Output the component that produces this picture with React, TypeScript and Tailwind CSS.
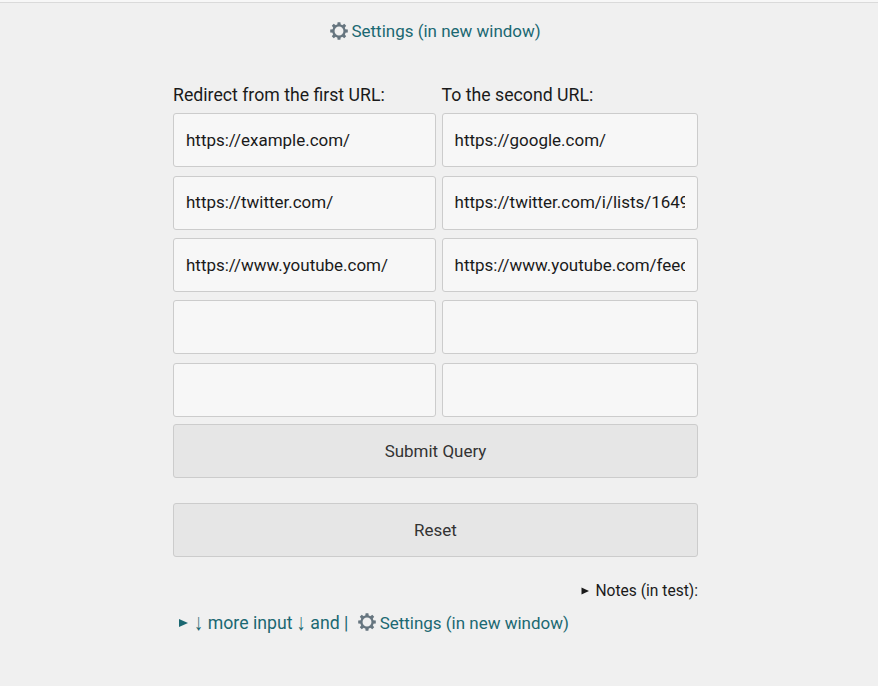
const rows = [
  ['https://example.com/', 'https://google.com/'],
  ['https://twitter.com/', 'https://twitter.com/i/lists/1649283'],
  ['https://www.youtube.com/', 'https://www.youtube.com/feed/subscriptions'],
  ['', ''],
  ['', ''],
];

function Gear() {
  return (
    <svg width="18" height="18" viewBox="0 0 18 18" fill="none" stroke="#66757f" className="mb-[2px] shrink-0">
      <circle cx="9" cy="9" r="5.6" strokeWidth="2.3" />
      {[0, 45, 90, 135, 180, 225, 270, 315].map((a) => (
        <path key={a} d="M7.2 3.4 7.6.2h2.8l.4 3.2z" fill="#66757f" stroke="none" transform={`rotate(${a} 9 9)`} />
      ))}
    </svg>
  );
}

function Field({ value }: { value: string }) {
  return (
    <input
      defaultValue={value}
      className="block h-[54px] w-full min-w-0 rounded-[3px] border border-[#cccccc] bg-[#f7f7f7] px-3 pb-[0.5px] text-[16.98px] text-[#1a1a1a] outline-none"
    />
  );
}

function DownArrow() {
  return <span className="mr-[0.2px] inline-block -translate-y-px scale-y-[1.3] font-['Liberation_Sans',sans-serif] leading-none">↓</span>;
}

export default function App() {
  return (
    <div className="h-[686px] overflow-hidden bg-[#f0f0f0] font-['Roboto',sans-serif] text-[17.6px] text-[#1a1a1a]">
      <div className="h-[3px] border-b border-[#dadada] bg-[#f7f7f7]" />
      <a className="mt-[16px] ml-[330px] flex h-[26px] w-fit items-center gap-[3.5px] text-[16.98px] whitespace-nowrap text-[#1b6872]">
        <Gear />
        <span>Settings (in new window)</span>
      </a>
      <form className="mt-[38px] ml-[173px] w-[525px]">
        <div className="grid h-[30.1px] grid-cols-[263px_256px] gap-x-[5.6px] text-[17.7px] leading-[25px]">
          <span>Redirect from the first URL:</span>
          <span>To the second URL:</span>
        </div>
        <div className="grid grid-cols-[263px_256px] gap-x-[5.6px] gap-y-[8.42px]">
          {rows.flatMap((r, i) => [<Field key={`${i}a`} value={r[0]} />, <Field key={`${i}b`} value={r[1]} />])}
        </div>
        <button type="button" className="mt-[7.2px] block h-[54px] w-full rounded-[3px] border border-[#cccccc] bg-[#e6e6e6] pt-[2px] text-[16.98px] text-[#333333]">Submit Query</button>
        <button type="button" className="mt-[25px] block h-[54px] w-full rounded-[3px] border border-[#cccccc] bg-[#e6e6e6] pt-[2px] text-[16.98px] text-[#333333]">Reset</button>
      </form>
      <div className="mt-[21px] ml-[173px] flex h-[26px] w-[525px] items-center justify-end gap-[6px] text-[15.58px]">
        <svg width="8" height="8" viewBox="0 0 8 8"><path d="M.5 .5 8 4 .5 7.5z" fill="#1a1a1a" /></svg>
        <span className="pt-[1px]">Notes (in test):</span>
      </div>
      <div className="mt-[6px] ml-[179px] flex h-[26px] items-center text-[17.7px] whitespace-nowrap text-[#1b6872]">
        <svg width="9" height="8" viewBox="0 0 9 8" className="mr-[6.3px]"><path d="M0 0 9 4 0 8z" fill="#1b6872" /></svg>
        <span><DownArrow /> more input <DownArrow /> and |</span>
        <a className="ml-[9.8px] flex items-center gap-[3.5px] text-[16.98px]"><Gear /><span className="pt-[1px]">Settings (in new window)</span></a>
      </div>
    </div>
  );
}
